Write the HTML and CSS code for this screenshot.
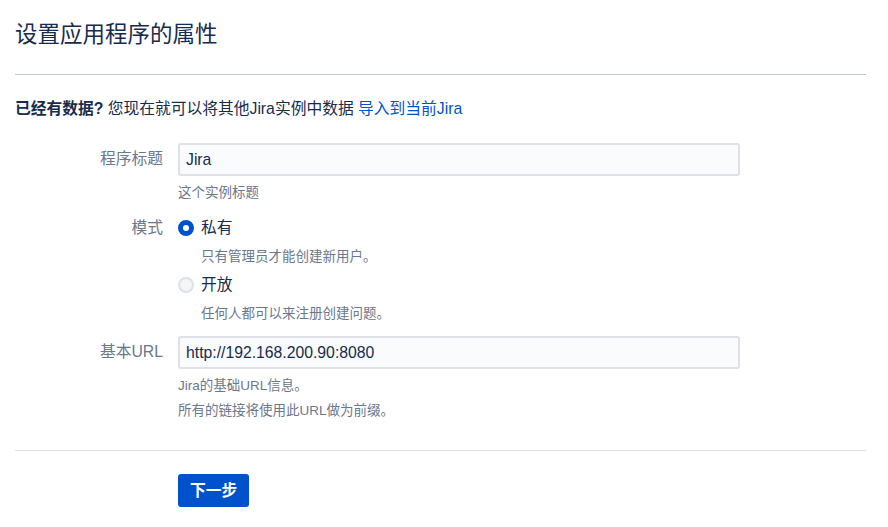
FILE: index.html
```html
<!DOCTYPE html>
<html lang="zh">
<head>
<meta charset="utf-8">
<title>设置应用程序的属性</title>
<link rel="stylesheet" href="styles.css">
</head>
<body>
<div class="page">
  <h1 class="title">设置应用程序的属性</h1>
  <hr class="rule rule-top">
  <p class="intro"><strong>已经有数据?</strong> 您现在就可以将其他Jira实例中数据 <a class="link" href="#">导入到当前Jira</a></p>

  <div class="form">
    <div class="row row-title">
      <label class="label">程序标题</label>
      <div class="field">
        <div class="input">Jira</div>
        <div class="help help-first">这个实例标题</div>
      </div>
    </div>

    <div class="row row-mode">
      <label class="label label-radio">模式</label>
      <div class="field">
        <div class="radio-line">
          <span class="radio checked"></span><span class="radio-text">私有</span>
        </div>
        <div class="desc">只有管理员才能创建新用户。</div>
        <div class="radio-line radio-second">
          <span class="radio"></span><span class="radio-text">开放</span>
        </div>
        <div class="desc">任何人都可以来注册创建问题。</div>
      </div>
    </div>

    <div class="row row-url">
      <label class="label">基本URL</label>
      <div class="field">
        <div class="input">http://192.168.200.90:8080</div>
        <div class="help help-first">Jira的基础URL信息。</div>
        <div class="help help-next">所有的链接将使用此URL做为前缀。</div>
      </div>
    </div>
  </div>

  <hr class="rule rule-bottom">
  <div class="actions">
    <button class="btn">下一步</button>
  </div>
</div>
</body>
</html>
```

FILE: styles.css
```css
html, body {
  margin: 0;
  padding: 0;
  background: #ffffff;
}
body {
  font-family: "Liberation Sans", "Noto Sans CJK SC", sans-serif;
  color: #172b4d;
  font-size: 15.75px;
}
.page {
  padding: 20px 22px 0 15px;
}
.title {
  margin: 0;
  font-size: 22.5px;
  line-height: 30px;
  font-weight: 400;
  color: #172b4d;
}
.rule {
  border: 0;
  height: 1px;
  margin: 0;
}
.rule-top {
  margin-top: 24px;
  background: #c1c7d0;
}
.rule-bottom {
  margin-top: 29px;
  background: #dfe1e6;
}
.intro {
  margin: 24px 0 0 0;
  line-height: 20px;
  font-size: 15.75px;
}
.intro strong {
  font-weight: 700;
}
.link {
  color: #0052cc;
  text-decoration: none;
}
.form {
  margin-top: 24px;
}
.row {
  display: grid;
  grid-template-columns: 148px 562px;
  column-gap: 15px;
}
.label {
  text-align: right;
  color: #6b778c;
  font-size: 15.75px;
  line-height: 20px;
  padding-top: 6px;
}
.label-radio {
  padding-top: 0;
}
.input {
  box-sizing: border-box;
  height: 33px;
  border: 2px solid #dfe1e6;
  border-radius: 3px;
  background: #fafbfc;
  padding: 0 6px;
  font-size: 15.75px;
  line-height: 29px;
  color: #172b4d;
}
.help {
  font-size: 13.5px;
  line-height: 20px;
  color: #6b778c;
}
.help-first {
  margin-top: 7px;
}
.help-next {
  margin-top: 5px;
}
.row-mode {
  margin-top: 15px;
}
.radio-line {
  display: flex;
  align-items: center;
  height: 20px;
  gap: 7px;
}
.radio-second {
  margin-top: 8px;
}
.radio {
  box-sizing: border-box;
  width: 16px;
  height: 16px;
  border-radius: 50%;
  border: 2px solid #dfe1e6;
  background: #f4f5f7;
}
.radio.checked {
  border: 5px solid #0052cc;
  background: #ffffff;
}
.radio-text {
  font-size: 15.75px;
  line-height: 20px;
  color: #172b4d;
}
.desc {
  margin-top: 9px;
  padding-left: 23px;
  font-size: 13.5px;
  line-height: 20px;
  color: #6b778c;
}
.row-url {
  margin-top: 12px;
}
.actions {
  margin-top: 23px;
  padding-left: 163px;
}
.btn {
  height: 33px;
  padding: 0 12px;
  border: 0;
  border-radius: 3px;
  background: #0052cc;
  color: #ffffff;
  font-family: "Liberation Sans", "Noto Sans CJK SC", sans-serif;
  font-size: 15.75px;
  font-weight: 700;
  line-height: 33px;
}
```
